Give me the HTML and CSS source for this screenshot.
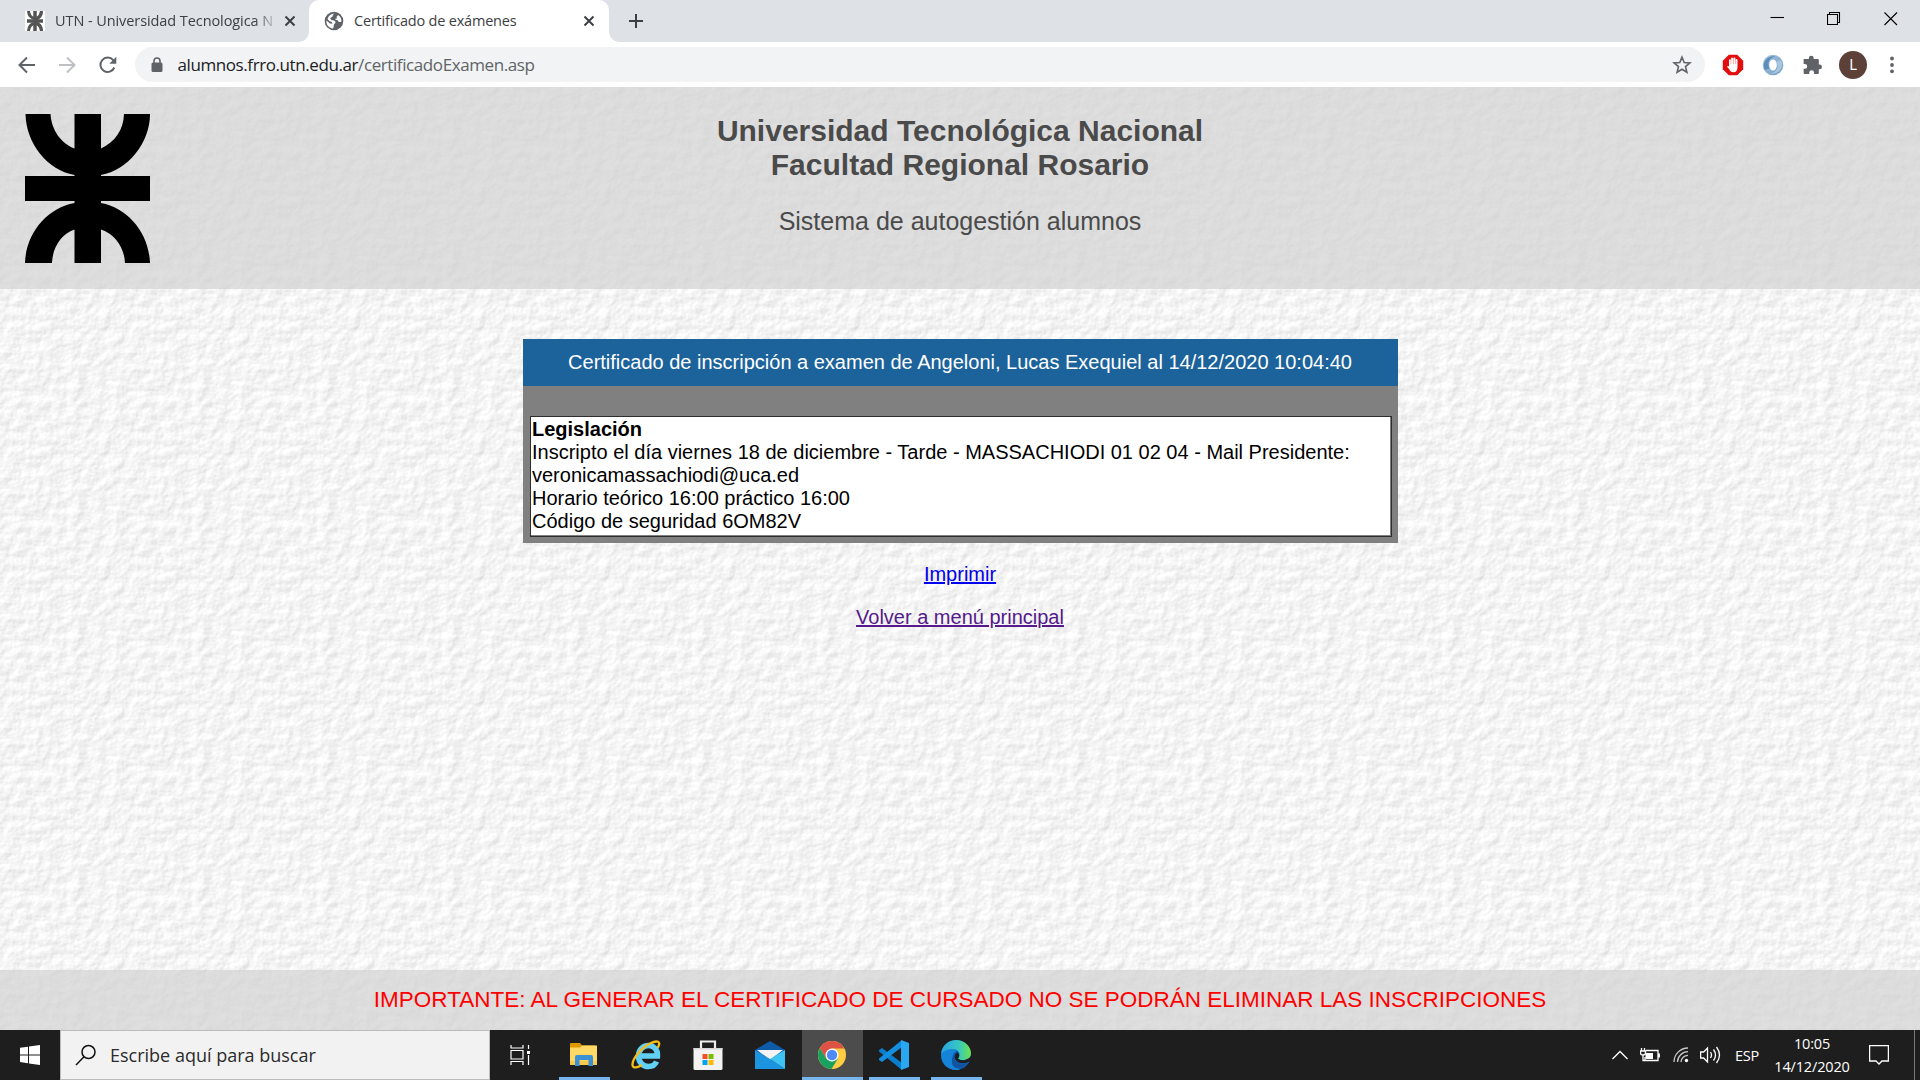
FILE: index.html
```html
<!DOCTYPE html>
<html lang="es">
<head>
<meta charset="utf-8">
<title>Certificado de exámenes</title>
<link rel="stylesheet" href="styles.css">
</head>
<body>
<div class="tabs">
  <div class="tab">
    <svg class="fav-utn" width="20" height="20" viewBox="0 0 20 20"><path fill="#fff" d="M0 0h20v20H0z"/><g fill="none" stroke="#555" stroke-width="3"><path d="M3.500 0Q4 7 10 7.500T16.500 0M3.500 20Q4 13 10 12.500T16.500 20" stroke-linejoin="bevel"/><path d="M16.500 0Q16 7 10 7.500M16.500 20Q16 13 10 12.500"/><path d="M10 0v20M2 10h16" stroke-width="3.500"/></g></svg>
    <span class="tab-text tab-text-long">UTN - Universidad Tecnologica N</span>
    <svg class="x" width="12" height="12" viewBox="0 0 12 12"><path d="M1.500 1.500l9 9m0-9l-9 9"/></svg>
  </div>
  <div class="tab active">
    <svg width="20" height="20" viewBox="0 0 20 20"><circle cx="10" cy="10" r="9.300" fill="#5f6368"/><path fill="#fff" d="M10.500 2.500C8 3.500 9.500 5.500 7.500 6.300S6.500 9 8.500 9.200s3.200.8 3 2.300-1.500 1.200-1.700 2.500.2 2.200-.8 3.500C4.500 17 2 13.500 2.400 9.500L6 12.500l2.500.3-.8-1.800-2.400-1L3.500 8C4.500 4.500 7 2.700 10.500 2.500zM14 4l-1.500 2 .6 1.300-1.800.5.300 1.200 2.200.3 1 1.600 2.500.2c.6-2.800-.8-5.600-3.300-7.100z"/></svg>
    <span class="tab-text">Certificado de exámenes</span>
    <svg class="x" width="12" height="12" viewBox="0 0 12 12"><path d="M1.500 1.500l9 9m0-9l-9 9"/></svg>
  </div>
  <svg class="plus" width="16" height="16" viewBox="0 0 16 16"><path d="M8 1v14M1 8h14"/></svg>
  <div class="window-buttons">
    <svg width="14" height="14" viewBox="0 0 14 14"><path d="M.5 5.500H14"/></svg>
    <svg width="14" height="14" viewBox="0 0 14 14"><path d="M.5 2.500h10v10H.5zM2.500 2.500v-2h10v10H10.500"/></svg>
    <svg width="14" height="14" viewBox="0 0 14 14"><path d="M.5.5l12.500 12.500M13 .5L.5 13"/></svg>
  </div>
</div>
<div class="toolbar">
  <svg class="nav" width="20" height="20" viewBox="0 0 20 20"><path d="M18 10H3M10 2.500L2.500 10l7.500 7.500"/></svg>
  <svg class="nav off" width="20" height="20" viewBox="0 0 20 20"><path d="M2 10h15M10 2.500l7.500 7.500-7.500 7.500"/></svg>
  <svg class="nav reload" width="20" height="20" viewBox="0 0 20 20"><path d="M16.300 12.500A7.200 7.200 0 1 1 15.200 5.200L17 7"/><path d="M18.300 1.800v7h-7z" class="solid"/></svg>
  <div class="omnibox">
    <svg width="12" height="16" viewBox="0 0 12 16"><rect x=".5" y="5.500" width="11" height="9.500" rx="1.500" fill="#5f6368"/><path d="M3 6V4a3 3 0 0 1 6 0v2" fill="none" stroke="#5f6368" stroke-width="1.600"/></svg>
    <span class="url">alumnos.frro.utn.edu.ar<span>/certificadoExamen.asp</span></span>
    <svg class="star" width="20" height="20" viewBox="0 0 20 20"><path d="M10 2.200l2.200 5.300 5.700.4-4.400 3.700 1.400 5.600-4.900-3-4.900 3 1.400-5.600L2.100 7.900l5.700-.4z" fill="none" stroke="#5f6368" stroke-width="1.600"/></svg>
  </div>
  <svg class="ext" width="22" height="22" viewBox="0 0 22 22"><path fill="#e40d0d" d="M6.800.7h8.400l6 6v8.600l-6 6H6.800l-6-6V6.700z"/><path fill="#fff" d="M7 12.500V6q0-.8.900-.8t.9.800v4h.3V4.500q0-.9 1-.9t1 .9V10h.3V4.500q0-.9 1-.9t1 .9V10h.3V6q0-.9.900-.9t.9.900v7c0 3.500-1.500 5.300-4.200 5.300-2 0-3-.8-4-3L5 12.700q.8-1.200 2-.2z"/></svg>
  <svg class="ext" width="22" height="22" viewBox="0 0 22 22"><defs><linearGradient id="ring" x1="0" y1="0" x2="1" y2="1"><stop offset="0" stop-color="#a9c5de"/><stop offset="1" stop-color="#6f9cc5"/></linearGradient></defs><circle cx="11" cy="11" r="10.300" fill="url(#ring)"/><path d="M3 16C-1 8 6 1 14 2.500 8 3.500 4.500 8 7.500 14.500" fill="#5c8dbb"/><path d="M19 6c4 8-3 15-11 13.500 6-1 9.500-5.500 6.500-12" fill="#a9c6e0"/><ellipse cx="11" cy="11" rx="3.800" ry="5.600" fill="#fff"/></svg>
  <svg class="ext" width="22" height="22" viewBox="0 0 22 22"><path fill="#5f6368" d="M2 5h5.700V4a2.600 2.600 0 0 1 5.200 0v1h4.600q1 0 1 1v5h.8a2.600 2.600 0 0 1 0 5.200h-.8v4q0 1-1 1h-4.200v-1.500a2.600 2.600 0 0 0-5.200 0v1.500H3q-1 0-1-1v-4.500h1.300a2.600 2.600 0 0 0 0-5.200H2z" transform="translate(.8 .4) scale(.92)"/></svg>
  <span class="avatar">L</span>
  <svg class="dots" width="6" height="20" viewBox="0 0 6 20"><circle cx="3" cy="3.500" r="1.900"/><circle cx="3" cy="10" r="1.900"/><circle cx="3" cy="16.300" r="1.900"/></svg>
</div>
<div class="page">
  <header class="head">
    <svg class="logo" width="125" height="149" viewBox="0 0 125 149"><path d="M.5 0H25.500C26.500 16 36 29.500 49.500 34.500V0H76V34.500C90 28 98.500 16 99 0H125C125 29 103 56 76 61V62H125V87H76V89C103 94 124 119 125 149H100C99.500 134 90 120 76 115.500V149H49.500V115.500C36 120 27.500 134 27 149H0C1 119 22 94 49.500 89V87H0V62H49.500V61C22 56 1 29 .5 0z"/></svg>
    <div class="titles">
      <h1>Universidad Tecnológica Nacional<br>Facultad Regional Rosario</h1>
      <p>Sistema de autogestión alumnos</p>
    </div>
  </header>
  <main>
    <section class="cert">
      <h2>Certificado de inscripción a examen de Angeloni, Lucas Exequiel al 14/12/2020 10:04:40</h2>
      <div class="exam"><b>Legislación</b><br>Inscripto el día viernes 18 de diciembre - Tarde - MASSACHIODI 01 02 04 - Mail Presidente: veronicamassachiodi@uca.ed<br>Horario teórico 16:00 práctico 16:00<br>Código de seguridad 6OM82V</div>
    </section>
    <a class="print">Imprimir</a>
    <a class="back">Volver a menú principal</a>
  </main>
  <footer>IMPORTANTE: AL GENERAR EL CERTIFICADO DE CURSADO NO SE PODRÁN ELIMINAR LAS INSCRIPCIONES</footer>
</div>
<div class="taskbar">
  <div class="start"><svg width="20" height="20" viewBox="0 0 20 20"><path fill="#fff" d="M0 2.800L8 1.700V9.400H0zM9 1.500L20 0v9.400H9zM0 10.400h8v7.800L0 17zM9 10.400h11V20L9 18.400z"/></svg></div>
  <div class="search">
    <svg width="22" height="22" viewBox="0 0 22 22"><g fill="none" stroke="#111" stroke-width="1.500"><circle cx="13.500" cy="8" r="6.500"/><path d="M9 12.800L1 21"/></g></svg>
    <span>Escribe aquí para buscar</span>
  </div>
  <div class="view"><svg width="22" height="20" viewBox="0 0 22 20"><path fill="none" stroke="#fff" stroke-width="1.200" d="M1 0v3h12V0M1 20v-3.500h12V20M1 5.500h12v8.500H1zM18.500 0v4M18.500 10v10"/><path fill="#fff" d="M17 6h3v3h-3z"/></svg></div>
  <div class="app open"><svg width="30" height="30" viewBox="0 0 30 30"><path fill="#e09a00" d="M1 4q0-1 1-1h9l2 2.500h13V9H1z"/><path fill="#ffd866" d="M1 7.500h10l2-2h15V24q0 1-1 1H2q-1 0-1-1z"/><path fill="#f8c94b" d="M1 21h27v3q0 1-1 1H2q-1 0-1-1z"/><path fill="#3b91d4" d="M6 26V17q0-2 2-2h14q2 0 2 2v9h-4.500v-6h-9v6z"/></svg></div>
  <div class="app"><svg width="30" height="30" viewBox="0 0 30 30"><path fill="none" stroke="#62d0f5" stroke-width="5.500" d="M8 16h18.500C27 9 22 5.500 17.500 5.500S7.500 9 7.500 16s5 10.500 10 10.500c4 0 6.800-2 8-5"/><path fill="none" stroke="#f4bd19" stroke-width="2.300" d="M26.500 8C31 1 26 0 19 3.500 10 8 1 19 1.500 25c.3 4 5.500 2.500 9.500 0"/></svg></div>
  <div class="app"><svg width="30" height="30" viewBox="0 0 30 30"><path fill="none" stroke="#eee" stroke-width="2.200" d="M8 9V1.500h14V9"/><path fill="#f2f2f2" d="M.5 8h29v20.500q0 1.500-1.500 1.500H2Q.5 30 .5 28.500z"/><path fill="#d8d8d8" d="M.5 8h29v1.500H.5z"/><path fill="#f25022" d="M9.500 14h5v5h-5z"/><path fill="#7fba00" d="M15.500 14h5v5h-5z"/><path fill="#00a4ef" d="M9.500 20h5v5h-5z"/><path fill="#ffb900" d="M15.500 20h5v5h-5z"/></svg></div>
  <div class="app"><svg width="30" height="30" viewBox="0 0 30 30"><path fill="#0d5ba8" d="M0 10L15 1l15 9v5H0z"/><path fill="#f3f3f3" d="M2 10h26L15 20z"/><path fill="#1d94e0" d="M0 10l15 9 15 10H0z"/><path fill="#3ec3f5" d="M30 10v19L15 19z"/></svg></div>
  <div class="app open current"><svg width="28" height="28" viewBox="0 0 28 28"><circle cx="14" cy="14" r="14" fill="#ffcd41"/><path fill="#de5145" d="M1.900 7A14 14 0 0 1 26.300 7.500H14L7.900 17.500z"/><path fill="#19a15f" d="M1.900 7A14 14 0 0 0 13.500 28L20 17.500 14 20.500 8 17.500z"/><circle cx="14" cy="14" r="6.500" fill="#fff"/><circle cx="14" cy="14" r="5.200" fill="#4c8bf5"/></svg></div>
  <div class="app open"><svg width="30" height="30" viewBox="0 0 30 30"><path fill="#0a7dcc" d="M0 10l3-2 20 15V30L0 11.500z"/><path fill="#148fdf" d="M0 20l3 2L23 7V0L0 18.500z"/><path fill="#29a7f2" d="M22 0l8 3v24l-8 3z"/></svg></div>
  <div class="app open"><svg width="30" height="30" viewBox="0 0 30 30"><defs><linearGradient id="eg"><stop offset=".1" stop-color="#2aa9e0"/><stop offset=".6" stop-color="#37c8c0"/><stop offset="1" stop-color="#6ee24c"/></linearGradient></defs><circle cx="15" cy="15" r="15" fill="#0d5cb2"/><path fill="#1583d8" d="M0 15C1 8 12 7 16 11c-5 1-8 11 3 18.400C9 32 0 25 0 15z"/><path fill="url(#eg)" d="M0 14C1 5 8 0 15 0c9 0 15 7 15 13 0 5-4 7-8 7-3 0-6-.5-5-2 4-4 0-9-6-9C6 9 1 12 0 14z"/><path fill="#1e1e1e" d="M16 12.500c-4 3-2.500 8 2 10 4 1.200 7 .5 10-1l2 .5V16c-2 4-10 6-13 2.500 2-2 1.500-4.500-1-6z"/><path fill="#12539f" d="M12.500 16c-.5 6 6 10.500 15.500 6C22 28 18 29 15 28c-5-2-5-8-2.500-12z"/></svg></div>
  <div class="tray">
    <svg class="chev" width="16" height="10" viewBox="0 0 16 10"><path d="M.5 9L8 1.500 15.500 9"/></svg>
    <svg class="batt" width="20" height="14" viewBox="0 0 20 14"><path d="M6 2.500h12v10H5V9M19.300 5.500v4M1.500 0v2.500M4.500 0v2.500M.5 3h5v2q0 2-2.500 2T.5 5zM3 7v5.500h2"/><path fill="#fff" stroke="none" d="M5.500 5H13v6H5.500z"/></svg>
    <svg class="wifi" width="16" height="16" viewBox="0 0 16 16"><path d="M1 15A14 14 0 0 1 15 1M4.500 15A10.500 10.500 0 0 1 15 4.700M8 15a7 7 0 0 1 7-6.700" stroke="#c8c8c8"/><circle cx="13.500" cy="13.500" r="1.700" fill="#fff" stroke="none"/></svg>
    <svg class="vol" width="21" height="18" viewBox="0 0 21 18"><path d="M.6 6h3L7.500 2v14L3.600 12h-3zM10.500 6q2 3 0 6M13.500 3.500q4 5.500 0 11M16.500 1q6 8 0 16"/></svg>
    <span class="lang">ESP</span>
    <div class="clock"><span>10:05</span><span>14/12/2020</span></div>
    <svg class="note" width="20" height="20" viewBox="0 0 20 20"><path d="M.6.600h18.800v15.400H13l-3 3-3-3H.6z"/></svg>
    <i class="peek"></i>
  </div>
</div>
</body>
</html>
```
FILE: styles.css
```css
* { box-sizing: border-box; }
body { margin: 0; width: 1920px; height: 1080px; overflow: hidden; display: flex; flex-direction: column; font-family: "Liberation Sans", Arial, sans-serif; }
svg { display: block; flex: none; }

/* Tab strip */
.tabs { height: 42px; background: #dee1e6; display: flex; align-items: center; font: 14.5px/20px "Open Sans", "Noto Sans", sans-serif; color: #3c4043; }
.tab { width: 309px; height: 42px; padding: 0 13px 0 25px; display: flex; align-items: center; }
.tab.active { width: 300px; padding: 0 14px 0 15px; background: #fff; border-radius: 10px 10px 0 0; position: relative; }
.tab.active::before, .tab.active::after { content: ""; position: absolute; bottom: 0; width: 10px; height: 10px; }
.tab.active::before { left: -10px; background: radial-gradient(circle at 0 0, transparent 9.5px, #fff 10px); }
.tab.active::after { right: -10px; background: radial-gradient(circle at 100% 0, transparent 9.5px, #fff 10px); }
.tab-text { margin: 0 0 1px 10px; flex: 1; white-space: nowrap; letter-spacing: -.2px; }
.tab-text-long { letter-spacing: -.08px; -webkit-mask-image: linear-gradient(90deg, #000 200px, transparent 224px); mask-image: linear-gradient(90deg, #000 200px, transparent 224px); }
.x { fill: none; stroke: #3c4043; stroke-width: 2; }
.plus { margin-left: 19px; fill: none; stroke: #3c4043; stroke-width: 2; }
.window-buttons { margin-left: auto; padding: 0 22px 5px 0; display: flex; gap: 43px; }
.window-buttons svg { fill: none; stroke: #000; stroke-width: 1.1; }

/* Toolbar */
.toolbar { height: 45px; background: #fff; display: flex; align-items: center; padding: 0 24px 0 17px; }
.nav { margin-right: 20px; fill: none; stroke: #5f6368; stroke-width: 2; }
.nav.off { stroke: #bdc1c6; }
.nav.reload { margin: 0 19px 0 1px; }
.nav .solid { fill: #5f6368; stroke: none; }
.omnibox { width: 1570px; height: 35px; margin-left: -2px; border-radius: 18px; background: #f1f3f4; display: flex; align-items: center; padding: 0 13px 0 16px; }
.url { flex: 1; margin-left: 14.5px; font: 17px "Open Sans", "Noto Sans", sans-serif; letter-spacing: -.41px; color: #202124; }
.url span { color: #5f6368; }
.ext { margin: 0 1px 0 16.8px; }
.avatar { width: 28px; height: 28px; margin-left: 15px; border-radius: 50%; background: #5d4037; color: #fff; font: 14px/28px Roboto, sans-serif; text-align: center; }
.dots { margin-left: 22px; fill: #5f6368; }

/* Page */
.page { flex: 1; display: flex; flex-direction: column; font-size: 20px; line-height: 23px;
  background: #f0f0f0 url("data:image/svg+xml,%3Csvg xmlns='http://www.w3.org/2000/svg' width='125' height='125'%3E%3Cfilter id='p' x='0' y='0' width='100%25' height='100%25' color-interpolation-filters='sRGB'%3E%3CfeTurbulence type='fractalNoise' baseFrequency='.072 .08' numOctaves='5' seed='23' stitchTiles='stitch'/%3E%3CfeColorMatrix values='0 0 0 0 0 0 0 0 0 0 0 0 0 0 0 1 0 0 0 0'/%3E%3CfeDiffuseLighting surfaceScale='.6' diffuseConstant='1.13' lighting-color='white'%3E%3CfeDistantLight azimuth='225' elevation='58'/%3E%3C/feDiffuseLighting%3E%3C/filter%3E%3Crect width='125' height='125' filter='url(%23p)'/%3E%3C/svg%3E"); }
.head { height: 202px; padding: 27px 25px 0; background: rgba(211,211,211,.72); display: flex; color: #4a4a4a; }
.titles { flex: 1; margin-right: 125px; text-align: center; }
h1 { margin: 0; font-size: 30px; line-height: 34px; }
.titles p { margin: 25px 0 0; font-size: 25px; line-height: 29px; }
main { flex: 1; padding-top: 50px; display: flex; flex-direction: column; align-items: center; }
.cert { width: 875px; height: 204px; background: #808080; padding-bottom: 6px; }
h2 { margin: 0 0 30px; height: 47px; background: #1c629b; color: #fff; font-size: 20px; line-height: 46px; font-weight: 400; text-align: center; white-space: nowrap; }
.exam { margin: 0 6px 0 7px; height: 121px; padding: 1px 1px 1px 1.5px; background: #fff; border: 1px solid #2d2d2d; box-shadow: inset -1px -1px 0 #808080; color: #000; }
.print { margin-top: 20px; color: #0000ee; text-decoration: underline; }
.back { margin-top: 20px; color: #551a8b; text-decoration: underline; }
footer { height: 60px; background: rgba(211,211,211,.72); color: #f00; font-size: 22.5px; line-height: 60px; text-align: center; white-space: nowrap; }

/* Taskbar */
.taskbar { height: 50px; background: #1e1e1e; display: flex; color: #fff; font-family: "Open Sans", "Noto Sans", sans-serif; }
.start { width: 60px; display: grid; place-items: center; }
.search { width: 430px; background: #f2f2f2; border: 1px solid #bbb; display: flex; align-items: center; padding-left: 14px; color: #2b2b2b; font-size: 18px; }
.search span { margin-left: 13px; }
.view { width: 63px; padding-left: 20px; display: flex; align-items: center; }
.app { width: 62px; display: grid; place-items: center; position: relative; }
.open::after { content: ""; position: absolute; left: 6px; right: 5px; bottom: 0; height: 3px; background: #76b5ee; }
.current { background: linear-gradient(90deg, transparent 1px, #4c4c4c 1px); }
.current::after { left: 1px; right: 0; }
.tray { margin-left: auto; display: flex; align-items: center; font-size: 14.500px; }
.tray svg { fill: none; stroke: #fff; stroke-width: 1.3; }
.batt { margin-left: 12px; }
.wifi { margin-left: 13px; }
.vol { margin-left: 11px; }
.lang { margin-left: 14px; width: 25px; letter-spacing: -.3px; }
.clock { margin-left: 14px; width: 76px; display: flex; flex-direction: column; align-items: center; line-height: 23px; letter-spacing: -.15px; white-space: nowrap; }
.note { margin-left: 19px; }
.peek { width: 1px; height: 50px; margin: 0 5px 0 25px; background: #777; }
```
